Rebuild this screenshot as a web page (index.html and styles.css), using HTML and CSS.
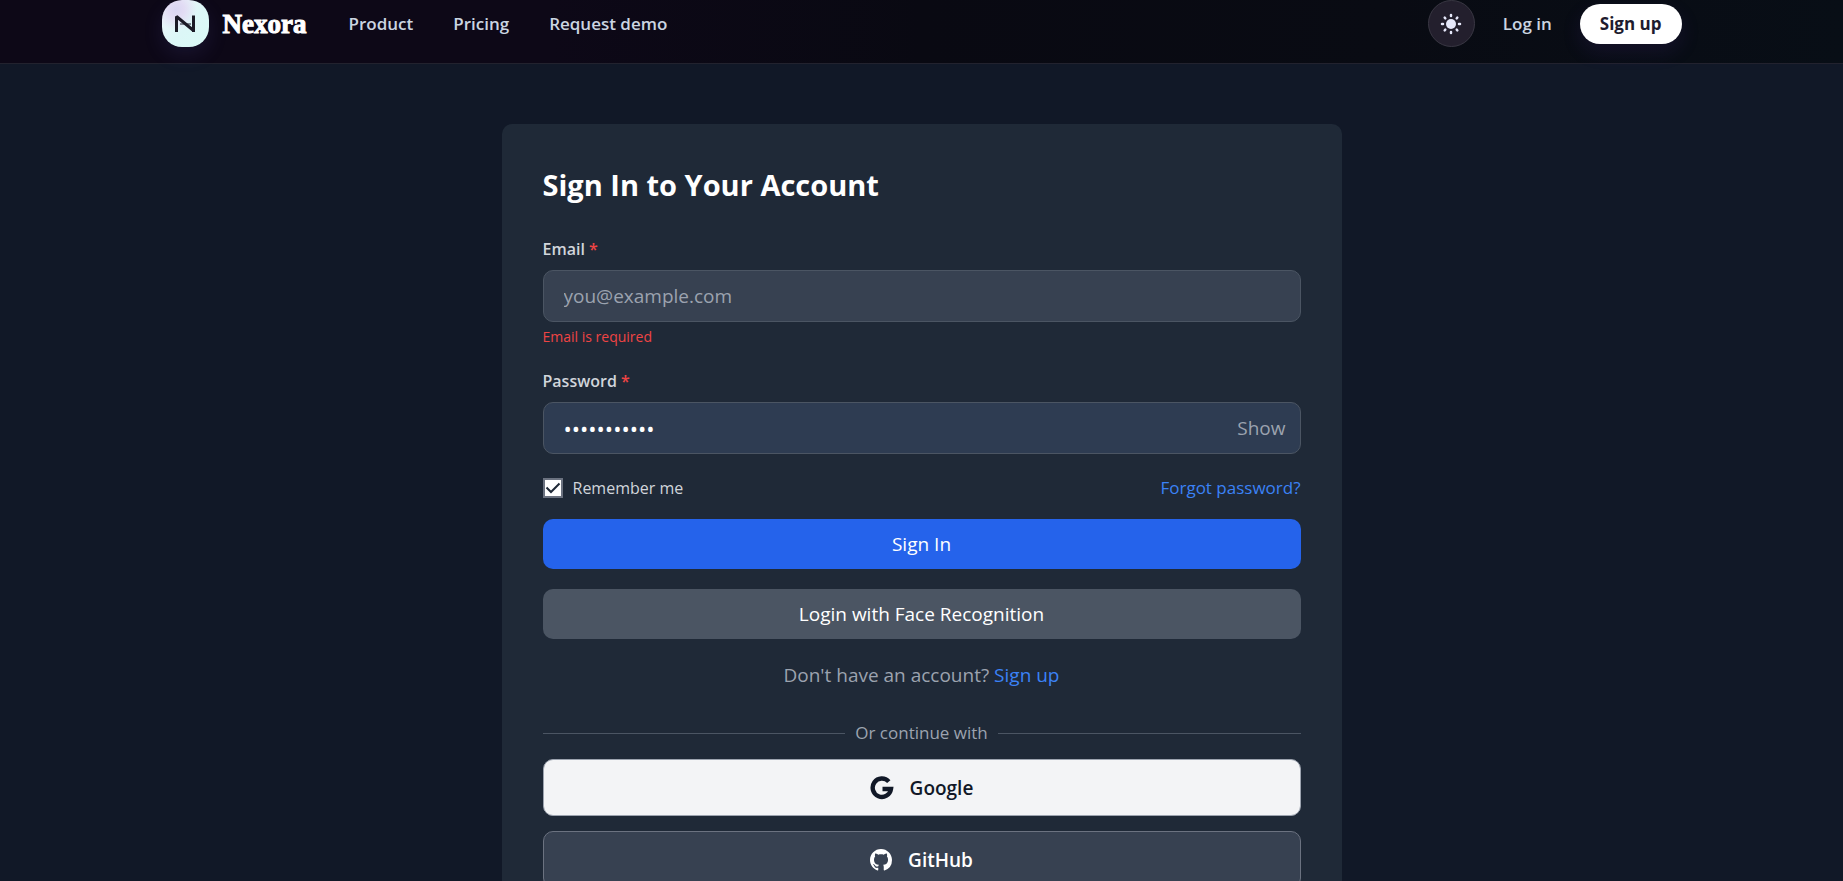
FILE: index.html
```html
<!DOCTYPE html>
<html lang="en">
<head>
    <meta charset="UTF-8">
    <meta name="viewport" content="width=device-width, initial-scale=1.0">
    <title>Sign In - Nexora</title>
    <link rel="stylesheet" href="styles.css">
</head>
<body>
<header class="site-header">
    <div class="header-inner">
        <a href="#" class="brand">
            <span class="brand-mark">
                <svg viewBox="0 0 24 24" width="24" height="24" fill="none" stroke="#1b1a26" stroke-width="3">
                    <path d="M7 12h11" stroke="#7d8590" stroke-width="2"/>
                    <path d="M3.500 20V4.500L20.500 18.500" stroke-linejoin="bevel"/>
                    <path d="M20.500 3.500V20"/>
                </svg>
            </span>
            <span class="brand-name">Nexora</span>
        </a>
        <nav class="main-nav">
            <a href="#">Product</a>
            <a href="#">Pricing</a>
            <a href="#">Request demo</a>
        </nav>
        <div class="header-actions">
            <button type="button" class="theme-toggle" aria-label="Toggle theme">
                <svg viewBox="0 0 24 24" width="24" height="24" fill="#e6e8fa" stroke="#e6e8fa" stroke-width="2.500" stroke-linecap="round">
                    <circle cx="12" cy="12" r="5" stroke="none"/>
                    <path d="M12 3v1M12 20v1M3 12h1M20 12h1M5.700 5.700l.6.6M17.700 17.700l.6.6M5.700 18.300l.6-.6M17.700 6.300l.6-.6"/>
                </svg>
            </button>
            <a href="#" class="login-link">Log in</a>
            <a href="#" class="signup-btn">Sign up</a>
        </div>
    </div>
</header>

<main class="page">
    <div class="card">
        <h1>Sign In to Your Account</h1>
        <form action="#" method="post" novalidate>
            <div class="form-group">
                <label for="email">Email <span class="required">*</span></label>
                <input type="email" id="email" name="email" placeholder="you@example.com">
                <p class="error">Email is required</p>
            </div>
            <div class="form-group">
                <label for="password">Password <span class="required">*</span></label>
                <div class="password-box">
                    <input type="password" id="password" name="password" value="password123">
                    <button type="button" class="show-btn">Show</button>
                </div>
            </div>
            <div class="form-row">
                <label class="remember" for="remember">
                    <input type="checkbox" id="remember" name="remember" checked>
                    <svg class="tick" viewBox="0 0 20 20" width="20" height="20" fill="none" stroke="#1f2937" stroke-width="2">
                        <path d="M3.500 9.500l4.500 4.500 8.500-8.500"/>
                    </svg>
                    Remember me
                </label>
                <a href="#" class="forgot">Forgot password?</a>
            </div>
            <div class="buttons">
                <button type="submit" class="btn btn-primary">Sign In</button>
                <button type="button" class="btn btn-secondary">Login with Face Recognition</button>
            </div>
        </form>

        <p class="no-account">Don't have an account? <a href="#">Sign up</a></p>

        <div class="divider">Or continue with</div>

        <div class="socials">
            <button type="button" class="social social-google">
                <svg viewBox="0 0 24 24" width="24" height="24" fill="none" stroke="#111827" stroke-width="4.400">
                    <path d="M18.800 5.600A9.200 9.200 0 1 0 21 13H12.500"/>
                </svg>
                Google
            </button>
            <button type="button" class="social social-github">
                <svg viewBox="0 0 16 16" width="22" height="22" fill="#fff">
                    <path d="M8 0C3.580 0 0 3.580 0 8c0 3.540 2.290 6.530 5.470 7.590.4.070.55-.17.55-.38 0-.19-.01-.82-.01-1.490-2.010.37-2.530-.49-2.690-.94-.09-.23-.48-.94-.82-1.130-.28-.15-.68-.52-.01-.53.63-.01 1.080.58 1.230.82.72 1.210 1.870.87 2.330.66.07-.52.28-.87.51-1.070-1.780-.2-3.640-.89-3.640-3.950 0-.87.31-1.590.82-2.150-.08-.2-.36-1.020.08-2.120 0 0 .67-.21 2.200.82.64-.18 1.320-.27 2-.27s1.360.09 2 .27c1.530-1.040 2.200-.82 2.200-.82.44 1.100.16 1.920.08 2.120.51.56.82 1.270.82 2.150 0 3.070-1.870 3.750-3.650 3.950.29.25.54.73.54 1.480 0 1.070-.01 1.930-.01 2.200 0 .21.15.46.55.38A8.010 8.010 0 0 0 16 8c0-4.420-3.580-8-8-8z"/>
                </svg>
                GitHub
            </button>
        </div>
    </div>
</main>
</body>
</html>
```
FILE: styles.css
```css
* {
    box-sizing: border-box;
}
body {
    margin: 0;
    background: #111827;
    color: #d1d5db;
    font-family: "Segoe UI", "Open Sans", "Noto Sans", sans-serif;
    font-size: 19px;
    line-height: 28px;
}
a {
    color: #3b82f6;
    text-decoration: none;
}
button,
input {
    font-family: inherit;
    font-size: 19px;
}
button {
    cursor: pointer;
}

/* header */
.site-header {
    background: linear-gradient(90deg, #0d0817 0%, #0d0817 30%, #090912 50%, #090b13 75%, #080e16 100%);
    border-bottom: 1px solid #22222e;
}
.header-inner {
    display: flex;
    align-items: center;
    max-width: 1520px;
    margin: 0 auto;
    padding-bottom: 16px;
}
.brand {
    display: flex;
    align-items: center;
    gap: 14px;
}
.brand-mark {
    display: flex;
    align-items: center;
    justify-content: center;
    width: 47px;
    height: 47px;
    border-radius: 20px;
    background: radial-gradient(circle at 30% 20%, #d9d6f2 0, #e2dcf4 16%, transparent 42%), linear-gradient(135deg, #f6f5fc, #dcf7f7 55%, #dafaf6);
    box-shadow: 0 8px 20px rgba(90, 90, 190, 0.14);
}
.brand-name {
    color: #fff;
    font-family: "Liberation Serif", serif;
    font-size: 27px;
    font-weight: bold;
    -webkit-text-stroke: 1px #fff;
}
.main-nav {
    display: flex;
    gap: 40px;
    margin-left: 42px;
}
.main-nav a,
.login-link {
    color: #cbd5e1;
    font-size: 17px;
    font-weight: 600;
}
.header-actions {
    display: flex;
    align-items: center;
    gap: 28px;
    margin-left: auto;
}
.theme-toggle {
    display: flex;
    align-items: center;
    justify-content: center;
    width: 47px;
    height: 47px;
    padding: 0;
    border: 1px solid #393743;
    border-radius: 50%;
    background: #231f2d;
}
.signup-btn {
    padding: 6px 20px;
    border-radius: 20px;
    background: #fff;
    color: #1e1b2e;
    font-size: 17px;
    font-weight: bold;
    box-shadow: 0 8px 20px rgba(90, 50, 170, 0.14);
}

/* sign in card */
.page {
    padding: 60px 20px;
}
.card {
    max-width: 840px;
    margin: 0 auto;
    padding: 41px;
    border-radius: 10px;
    background: #1f2937;
}
.card h1 {
    margin: 0 0 30px;
    color: #fff;
    font-size: 29px;
    line-height: 40px;
}
.form-group {
    margin-bottom: 20px;
}
.form-group label {
    display: block;
    margin-bottom: 7px;
    font-size: 16px;
    font-weight: 600;
}
.required {
    color: #ef4444;
}
.form-group input {
    display: block;
    width: 100%;
    height: 52px;
    padding: 0 20px;
    border: 1px solid #4b5563;
    border-radius: 10px;
    background: #374151;
    color: #fff;
}
.form-group input::placeholder {
    color: #9ca3af;
}
.error {
    margin: 5px 0 0;
    color: #ef4444;
    font-size: 14px;
    line-height: 20px;
}
.password-box {
    position: relative;
}
.form-group .password-box input {
    background: #2e3c52;
    font-size: 22px;
}
.show-btn {
    position: absolute;
    top: 0;
    right: 15px;
    height: 100%;
    padding: 0;
    border: 0;
    background: none;
    color: #9ca3af;
}
.form-row {
    display: flex;
    align-items: center;
    justify-content: space-between;
    margin-bottom: 17px;
    font-size: 16px;
}
.remember {
    display: flex;
    align-items: center;
    position: relative;
    gap: 10px;
}
.remember input {
    width: 20px;
    height: 20px;
    margin: 0;
    appearance: none;
    border: 2px solid #6b7280;
    background: #fff;
}
.tick {
    position: absolute;
    left: 0;
    display: none;
    pointer-events: none;
}
.remember input:checked + .tick {
    display: block;
}
.forgot {
    font-size: 17px;
}
.buttons {
    display: flex;
    flex-direction: column;
    gap: 20px;
}
.btn {
    height: 50px;
    border: 0;
    border-radius: 10px;
    color: #fff;
}
.btn-primary {
    background: #2563eb;
}
.btn-secondary {
    background: #4b5563;
}
.no-account {
    margin: 22px 0 30px;
    color: #9ca3af;
    text-align: center;
}
.divider {
    display: flex;
    align-items: center;
    gap: 10px;
    margin-bottom: 12px;
    color: #9ca3af;
    font-size: 17px;
}
.divider::before,
.divider::after {
    content: "";
    flex: 1;
    height: 1px;
    background: #4b5563;
}
.socials {
    display: flex;
    flex-direction: column;
    gap: 15px;
}
.social {
    display: flex;
    align-items: center;
    justify-content: center;
    gap: 16px;
    height: 57px;
    border: 1px solid #9ca3af;
    border-radius: 10px;
    font-weight: 600;
}
.social-google {
    background: #f3f4f6;
    color: #111827;
}
.social-github {
    border-color: #6b7280;
    background: #374151;
    color: #fff;
}
```
